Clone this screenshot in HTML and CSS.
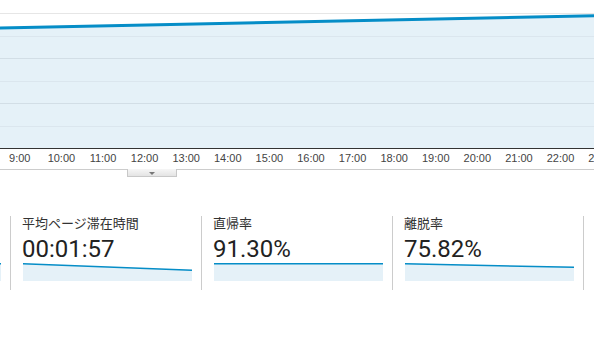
FILE: index.html
```html
<!DOCTYPE html>
<html>
<head>
  <title>Audience overview</title>
  <link rel="stylesheet" href="styles.css">
</head>
<body>
  <div class="chart">
    <svg class="plot" width="594" height="149" viewBox="0 0 594 149">
      <line x1="0" y1="13.5" x2="594" y2="13.5" stroke="#e6e6e6"/>
      <polygon points="0,28 594,15.5 594,148 0,148" fill="#e5f1f8"/>
      <line x1="0" y1="36.5" x2="594" y2="36.5" stroke="#dbe6ee"/>
      <line x1="0" y1="58.5" x2="594" y2="58.5" stroke="#d2dee6"/>
      <line x1="0" y1="81.5" x2="594" y2="81.5" stroke="#dbe6ee"/>
      <line x1="0" y1="103.5" x2="594" y2="103.5" stroke="#d2dee6"/>
      <line x1="0" y1="126.5" x2="594" y2="126.5" stroke="#dbe6ee"/>
      <polyline points="0,28 594,15.8" fill="none" stroke="#058dc7" stroke-width="3"/>
      <line x1="0" y1="148.5" x2="594" y2="148.5" stroke="#333"/>
    </svg>
    <div class="axis">
      <span>9:00</span><span>10:00</span><span>11:00</span><span>12:00</span>
      <span>13:00</span><span>14:00</span><span>15:00</span><span>16:00</span>
      <span>17:00</span><span>18:00</span><span>19:00</span><span>20:00</span>
      <span>21:00</span><span>22:00</span><span>23:00</span>
    </div>
    <div class="scroller">
      <div class="scroller-tab"><span class="arrow"></span></div>
    </div>
  </div>

  <div class="metrics">
    <div class="metric">
      <div class="metric-label">&nbsp;</div>
      <div class="metric-value">&nbsp;</div>
      <svg class="spark" width="169" height="18" viewBox="0 0 169 18">
        <polygon points="0,0.5 169,0.5 169,18 0,18" fill="#e5f1f8"/>
        <polyline points="0,0.8 169,0.8" fill="none" stroke="#058dc7" stroke-width="1.5"/>
      </svg>
    </div>
    <div class="metric">
      <div class="metric-label">平均ページ滞在時間</div>
      <div class="metric-value">00:01:57</div>
      <svg class="spark" width="169" height="18" viewBox="0 0 169 18">
        <polygon points="0,0.5 169,7 169,18 0,18" fill="#e5f1f8"/>
        <polyline points="0,0.8 169,7.3" fill="none" stroke="#058dc7" stroke-width="1.5"/>
      </svg>
    </div>
    <div class="metric">
      <div class="metric-label">直帰率</div>
      <div class="metric-value">91.30%</div>
      <svg class="spark" width="169" height="18" viewBox="0 0 169 18">
        <polygon points="0,0.5 169,0.5 169,18 0,18" fill="#e5f1f8"/>
        <polyline points="0,0.8 169,0.8" fill="none" stroke="#058dc7" stroke-width="1.5"/>
      </svg>
    </div>
    <div class="metric">
      <div class="metric-label">離脱率</div>
      <div class="metric-value">75.82%</div>
      <svg class="spark" width="169" height="18" viewBox="0 0 169 18">
        <polygon points="0,0.5 169,4 169,18 0,18" fill="#e5f1f8"/>
        <polyline points="0,0.8 169,4.3" fill="none" stroke="#058dc7" stroke-width="1.5"/>
      </svg>
    </div>
    <div class="metric"></div>
  </div>
</body>
</html>
```

FILE: styles.css
```css
* {
  box-sizing: border-box;
}

body {
  margin: 0;
  width: 594px;
  height: 344px;
  overflow: hidden;
  background-color: #fff;
  font-family: "Liberation Sans", Arial, "Noto Sans CJK JP", sans-serif;
  color: #333;
}

.plot {
  display: block;
}

.axis {
  display: flex;
  height: 20px;
  padding-top: 3px;
  margin-left: -1px;
  font-size: 11px;
  line-height: 13px;
  color: #444;
  white-space: nowrap;
}

.axis span {
  flex: 0 0 41.6px;
  text-align: center;
}

.scroller {
  border-top: 1px solid #ccc;
  height: 8px;
}

.scroller-tab {
  display: flex;
  justify-content: center;
  width: 50px;
  height: 8px;
  margin-left: 127px;
  margin-top: -1px;
  border: 1px solid #c8c8c8;
  border-top: none;
  background: linear-gradient(#f6f6f6, #e4e4e4);
}

.arrow {
  margin-top: 3px;
  width: 0;
  height: 0;
  border-left: 3px solid transparent;
  border-right: 3px solid transparent;
  border-top: 3px solid #777;
}

.metrics {
  display: flex;
  margin-top: 39px;
  margin-left: -180px;
}

.metric {
  flex: 0 0 191px;
  height: 74px;
  padding-left: 12px;
  border-right: 1px solid #ccc;
}

.metric-label {
  margin-left: -1px;
  height: 14px;
  font-family: "Noto Sans CJK JP", sans-serif;
  font-size: 13px;
  line-height: 14px;
  color: #333;
}

.metric-value {
  margin-top: 6px;
  margin-left: -1px;
  font-family: Roboto, "Liberation Sans", sans-serif;
  font-size: 24px;
  line-height: 26px;
  color: #222;
}

.spark {
  display: block;
  margin-top: 1px;
}
```
